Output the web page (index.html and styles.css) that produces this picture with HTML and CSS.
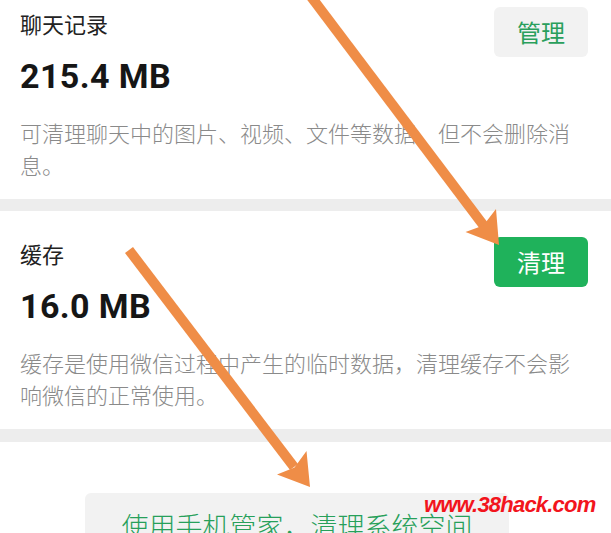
FILE: index.html
```html
<!DOCTYPE html>
<html lang="zh-CN">
<head>
<meta charset="utf-8">
<title>存储空间</title>
<link rel="stylesheet" href="styles.css">
</head>
<body>
<div class="page">
  <section class="card first">
    <div class="head">
      <div class="title">聊天记录</div>
      <div class="btn btn-gray">管理</div>
    </div>
    <div class="size">215.4 MB</div>
    <p class="desc">可清理聊天中的图片、视频、文件等数据，但不会删除消息。</p>
  </section>
  <div class="gap"></div>
  <section class="card">
    <div class="head">
      <div class="title">缓存</div>
      <div class="btn btn-green">清理</div>
    </div>
    <div class="size">16.0 MB</div>
    <p class="desc">缓存是使用微信过程中产生的临时数据，清理缓存不会影响微信的正常使用。</p>
  </section>
  <div class="gap gap2"></div>
  <div class="bottom">
    <div class="sys-btn">使用手机管家，清理系统空间</div>
  </div>

  <svg class="arrows" width="611" height="533" viewBox="0 0 611 533">
    <g fill="#ef8d47" stroke="none">
      <line x1="309" y1="-6" x2="484" y2="226" stroke="#ef8d47" stroke-width="10"/>
      <polygon points="499,245 465.5,232 483.3,225.5 496,209"/>
      <line x1="129" y1="250" x2="294" y2="467" stroke="#ef8d47" stroke-width="10"/>
      <polygon points="310,487 277,474.5 294.5,467.5 306.5,451"/>
    </g>
  </svg>
  <div class="watermark">www.38hack.com</div>
</div>
</body>
</html>
```
FILE: styles.css
```css
html, body {
  margin: 0;
  padding: 0;
  background: #ffffff;
}

body {
  width: 611px;
  height: 533px;
  overflow: hidden;
  font-family: "Noto Sans CJK SC", "Noto Sans", sans-serif;
}

.page {
  position: relative;
  width: 611px;
  height: 533px;
  overflow: hidden;
  background: #ffffff;
}

.card {
  padding: 26px 23px 19px 20px;
  background: #ffffff;
}

.card.first {
  margin-top: -19px;
}

.head {
  display: flex;
  justify-content: space-between;
  align-items: flex-start;
  height: 50px;
}

.title {
  font-size: 22px;
  line-height: 30px;
  margin-top: 1px;
  color: #222222;
  font-weight: 400;
}

.btn {
  width: 94px;
  height: 50px;
  border-radius: 6px;
  display: flex;
  align-items: center;
  justify-content: center;
  font-size: 24px;
  line-height: 1;
  font-weight: 400;
}

.btn-gray {
  background: #f2f2f2;
  color: #2a9f5c;
}

.btn-green {
  background: #1fb25b;
  color: #ffffff;
}

.size {
  font-family: Roboto, "Noto Sans", sans-serif;
  font-weight: 700;
  font-size: 34px;
  line-height: 40px;
  letter-spacing: 0.4px;
  color: #161616;
  margin-top: -1px;
}

.desc {
  margin: 20px 0 0;
  font-size: 22px;
  line-height: 32px;
  color: #8a8a8a;
  font-weight: 300;
}

.gap {
  height: 12px;
  background: #ededed;
}

.gap2 {
  height: 13px;
}

.bottom {
  padding-top: 51px;
  padding-left: 85px;
}

.sys-btn {
  width: 424px;
  height: 70px;
  box-sizing: border-box;
  padding-top: 15px;
  border-radius: 6px;
  background: #f2f2f2;
  color: #27a05a;
  font-size: 27px;
  line-height: 36px;
  text-align: center;
  font-weight: 300;
}

.arrows {
  position: absolute;
  left: 0;
  top: 0;
  pointer-events: none;
}

.watermark {
  position: absolute;
  left: 424px;
  top: 491px;
  font-family: "Liberation Sans", Arial, sans-serif;
  font-weight: 700;
  font-style: italic;
  font-size: 22px;
  line-height: 28px;
  color: #f2151d;
  letter-spacing: -0.8px;
}
```
